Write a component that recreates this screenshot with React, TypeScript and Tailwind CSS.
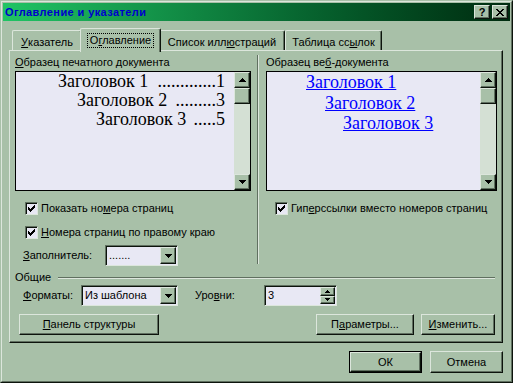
import type { ReactNode } from 'react'

const raised =
  'border border-t-[#dce6dc] border-l-[#dce6dc] border-r-[#0c140c] border-b-[#0c140c] shadow-[inset_-1px_-1px_#607060]'
const sunken =
  'border border-t-[#607060] border-l-[#607060] border-r-[#dce6dc] border-b-[#dce6dc] shadow-[inset_1px_1px_#0c140c]'

const UP = ['...X...', '..XXX..', '.XXXXX.', 'XXXXXXX']
const DOWN = ['XXXXXXX', '.XXXXX.', '..XXX..', '...X...']
const SMALL_UP = ['..X..', '.XXX.', 'XXXXX']
const SMALL_DOWN = ['XXXXX', '.XXX.', '..X..']
const CLOSE = ['XX....XX', '.XX..XX.', '..XXXX..', '...XX...', '..XXXX..', '.XX..XX.', 'XX....XX']
const CHECK = ['......X', '.....XX', 'X...XXX', 'XX.XXX.', 'XXXXX..', '.XXX...', '..X....']

function Pix({ rows }: { rows: string[] }) {
  const w = rows[0].length
  const h = rows.length
  return (
    <svg width={w} height={h} viewBox={`0 0 ${w} ${h}`} shapeRendering="crispEdges">
      {rows.flatMap((r, y) =>
        r.split('').map((c, x) =>
          c === 'X' ? <rect key={`${x}-${y}`} x={x} y={y} width={1} height={1} fill="#000" /> : null
        )
      )}
    </svg>
  )
}

// label with underlined access key
function Acc({ t, k }: { t: string; k: number }) {
  return (
    <>
      {t.slice(0, k)}
      <span className="underline">{t[k]}</span>
      {t.slice(k + 1)}
    </>
  )
}

function Check() {
  return (
    <div className={`${sunken} w-[13px] h-[13px] bg-[#e8e8f4] flex items-center justify-center shrink-0`}>
      <Pix rows={CHECK} />
    </div>
  )
}

function CheckRow({ className, children }: { className: string; children: ReactNode }) {
  return (
    <div className={`flex items-center h-[13px] gap-[3px] ${className}`}>
      <Check />
      <span className="whitespace-nowrap">{children}</span>
    </div>
  )
}

function ScrollBar() {
  return (
    <div className="w-[16px] flex flex-col bg-[#d4e0d4] shrink-0">
      <div className={`${raised} h-[16px] bg-[#a8c0a8] flex items-center justify-center`}>
        <Pix rows={UP} />
      </div>
      <div className={`${raised} h-[16px] bg-[#a8c0a8]`} />
      <div className="flex-1" />
      <div className={`${raised} h-[16px] bg-[#a8c0a8] flex items-center justify-center`}>
        <Pix rows={DOWN} />
      </div>
    </div>
  )
}

function Combo({ className, value }: { className: string; value: string }) {
  return (
    <div className={`${sunken} ${className} h-[21px] p-px flex bg-[#e8e8f4]`}>
      <span className="flex-1 pl-[2px] leading-[17px] whitespace-nowrap">{value}</span>
      <div className={`${raised} w-[16px] h-[17px] bg-[#a8c0a8] flex items-center justify-center`}>
        <Pix rows={DOWN} />
      </div>
    </div>
  )
}

function Spin() {
  return (
    <div className={`${sunken} w-[73px] h-[21px] p-px flex bg-[#e8e8f4]`}>
      <span className="flex-1 pl-[2px] leading-[17px]">3</span>
      <div className="w-[15px] flex flex-col">
        <div className={`${raised} flex-1 bg-[#a8c0a8] flex items-center justify-center`}>
          <Pix rows={SMALL_UP} />
        </div>
        <div className={`${raised} flex-1 bg-[#a8c0a8] flex items-center justify-center`}>
          <Pix rows={SMALL_DOWN} />
        </div>
      </div>
    </div>
  )
}

function Button({ className, children, primary }: { className: string; children: ReactNode; primary?: boolean }) {
  const inner = (
    <div className={`${raised} h-full flex items-center justify-center whitespace-nowrap`}>{children}</div>
  )
  if (primary) {
    return <div className={`${className} border border-black`}>{inner}</div>
  }
  return <div className={className}>{inner}</div>
}

function Tab({ className, children, active }: { className: string; children: ReactNode; active?: boolean }) {
  return (
    <div
      className={`${className} border-t border-l border-r border-t-[#dce6dc] border-l-[#dce6dc] border-r-[#0c140c] shadow-[inset_-1px_0_#607060] rounded-t-[2px] bg-[#a8c0a8] flex justify-center whitespace-nowrap ${
        active ? 'h-[24px] -mb-[2px] -mx-[2px] relative z-10 pt-[4px]' : 'h-[20px] pt-[5px]'
      }`}
    >
      {children}
    </div>
  )
}

const printLines = [
  { pl: 'pl-[42px]', text: 'Заголовок 1', dots: '.............', page: '1' },
  { pl: 'pl-[61px]', text: 'Заголовок 2', dots: '.........', page: '3' },
  { pl: 'pl-[80px]', text: 'Заголовок 3', dots: '.....', page: '5' },
]

const webLines = [
  { pl: 'pl-[39px]', text: 'Заголовок 1' },
  { pl: 'pl-[58px]', text: 'Заголовок 2' },
  { pl: 'pl-[76px]', text: 'Заголовок 3' },
]

export default function App() {
  return (
    <div className="w-[513px] h-[383px] bg-[#a8c0a8] border border-t-[#a8c0a8] border-l-[#a8c0a8] border-r-[#0c140c] border-b-[#0c140c] font-['Liberation_Sans',sans-serif] text-[11px] leading-[13px] text-black select-none">
      <div className="h-full border border-t-[#dce6dc] border-l-[#dce6dc] border-r-[#607060] border-b-[#607060] p-px flex flex-col">
        {/* title bar */}
        <div className="h-[18px] flex items-center gap-[2px] pl-[2px] pr-[2px] bg-linear-to-r from-[#20c464] to-[#002c10]">
          <span className="flex-1 font-bold tracking-[0.4px] text-[#0000cc]">Оглавление и указатели</span>
          <div className={`${raised} w-[16px] h-[14px] bg-[#a8c0a8] flex items-center justify-center font-bold leading-[12px]`}>
            ?
          </div>
          <div className={`${raised} w-[16px] h-[14px] bg-[#a8c0a8] flex items-center justify-center`}>
            <Pix rows={CLOSE} />
          </div>
        </div>

        {/* tabs */}
        <div className="mt-[7px] h-[22px] flex items-end pl-[9px]">
          <Tab className="w-[70px]">
            <Acc t="Указатель" k={0} />
          </Tab>
          <Tab className="w-[81px]" active>
            <span className="border border-dotted border-black px-[2px] h-[15px]">
              <Acc t="Оглавление" k={1} />
            </span>
          </Tab>
          <Tab className="w-[126px]">
            <Acc t="Список иллюстраций" k={10} />
          </Tab>
          <Tab className="w-[97px]">
            <Acc t="Таблица ссылок" k={10} />
          </Tab>
        </div>

        {/* tab panel */}
        <div className={`${raised} ml-[6px] w-[494px] h-[293px] flex flex-col pl-[5px]`}>
          <div className="flex">
            {/* print preview */}
            <div className="w-[236px] flex flex-col pt-[5px]">
              <div className="whitespace-nowrap">
                <Acc t="Образец печатного документа" k={0} />
              </div>
              <div className="mt-[2px] h-[120px] border border-black bg-[#e8e8f4] flex">
                <div className="flex-1 min-w-0 pr-[9px] font-['Liberation_Serif',serif] text-[18px] leading-[19px]">
                  {printLines.map((l) => (
                    <div key={l.text} className={`flex whitespace-nowrap ${l.pl}`}>
                      <span>{l.text}</span>
                      <span className="flex-1 text-right">{l.dots}</span>
                      <span>{l.page}</span>
                    </div>
                  ))}
                </div>
                <ScrollBar />
              </div>
              <CheckRow className="mt-[11px] pl-[10px]">
                <Acc t="Показать номера страниц" k={11} />
              </CheckRow>
              <CheckRow className="mt-[11px] pl-[10px]">
                <Acc t="Номера страниц по правому краю" k={0} />
              </CheckRow>
              <div className="mt-[6px] flex items-center pl-[8px]">
                <span className="w-[82px]">
                  <Acc t="Заполнитель:" k={0} />
                </span>
                <Combo className="w-[73px]" value="......." />
              </div>
            </div>

            {/* separator */}
            <div className="ml-[6px] w-[2px] mt-[4px] mb-[2px] border-l border-l-[#607060] border-r border-r-[#dce6dc]" />

            {/* web preview */}
            <div className="ml-[7px] w-[231px] flex flex-col pt-[5px]">
              <div className="whitespace-nowrap">
                <Acc t="Образец веб-документа" k={10} />
              </div>
              <div className="mt-[2px] h-[120px] border border-black bg-[#e8e8f4] flex">
                <div className="flex-1 min-w-0 font-['Liberation_Serif',serif] text-[18px] leading-[20.5px] text-[#0000ff]">
                  {webLines.map((l) => (
                    <div key={l.text} className={`whitespace-nowrap ${l.pl}`}>
                      <span className="underline">{l.text}</span>
                    </div>
                  ))}
                </div>
                <ScrollBar />
              </div>
              <CheckRow className="mt-[11px] pl-[9px]">
                <Acc t="Гиперссылки вместо номеров страниц" k={3} />
              </CheckRow>
            </div>
          </div>

          {/* general */}
          <div className="mt-[5px] h-[13px] flex items-center pr-[7px]">
            <span>Общие</span>
            <div className="flex-1 ml-[7px] h-[2px] border-t border-t-[#607060] border-b border-b-[#dce6dc]" />
          </div>

          <div className="mt-px flex items-center pl-[8px]">
            <span className="w-[58px]">
              <Acc t="Форматы:" k={0} />
            </span>
            <Combo className="w-[97px]" value="Из шаблона" />
            <span className="ml-[17px] w-[69px]">
              <Acc t="Уровни:" k={3} />
            </span>
            <Spin />
          </div>

          <div className="mt-[8px] flex pl-[4px] pr-[7px] gap-[7px]">
            <Button className="w-[140px] h-[21px]">
              <Acc t="Панель структуры" k={0} />
            </Button>
            <div className="flex-1" />
            <Button className="w-[98px] h-[21px]">
              <Acc t="Параметры..." k={1} />
            </Button>
            <Button className="w-[74px] h-[21px]">
              <Acc t="Изменить..." k={0} />
            </Button>
          </div>
        </div>

        {/* dialog buttons */}
        <div className="mt-[8px] flex justify-end gap-[8px] pr-[7px]">
          <Button className="w-[73px] h-[22px]" primary>
            ОК
          </Button>
          <Button className="w-[73px] h-[22px]">Отмена</Button>
        </div>
      </div>
    </div>
  )
}
